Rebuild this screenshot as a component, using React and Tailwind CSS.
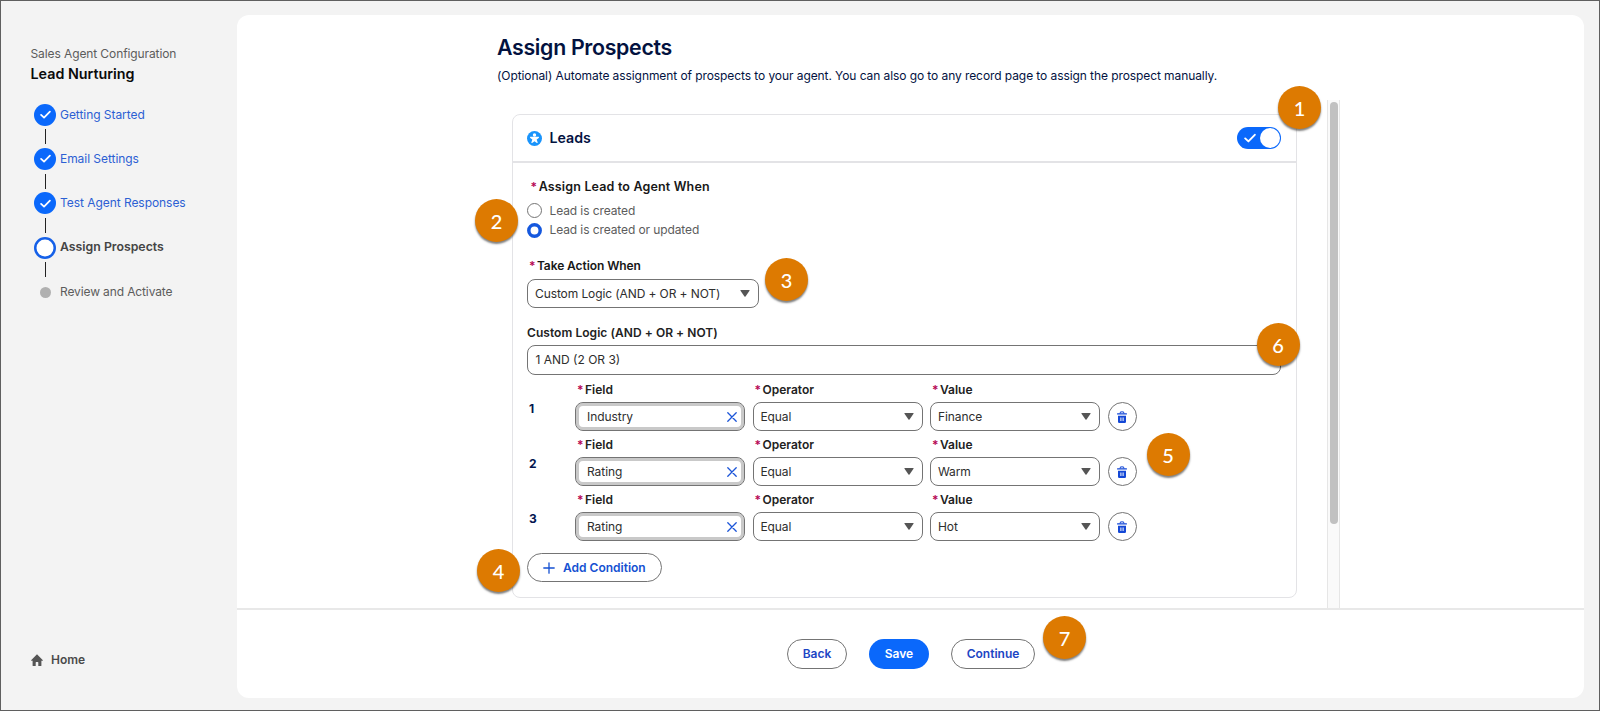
const steps = [
  { label: 'Getting Started', state: 'done' },
  { label: 'Email Settings', state: 'done' },
  { label: 'Test Agent Responses', state: 'done' },
  { label: 'Assign Prospects', state: 'current' },
  { label: 'Review and Activate', state: 'todo' },
];

const conditions = [
  { field: 'Industry', operator: 'Equal', value: 'Finance' },
  { field: 'Rating', operator: 'Equal', value: 'Warm' },
  { field: 'Rating', operator: 'Equal', value: 'Hot' },
];

function Check({ className }) {
  return (
    <svg viewBox="0 0 12 12" className={className} fill="none" stroke="currentColor" strokeWidth="1.9" strokeLinecap="round" strokeLinejoin="round">
      <path d="M1.2 6.4 4.4 9.4 10.8 2.8" />
    </svg>
  );
}

function StepMarker({ state }) {
  if (state === 'done')
    return (
      <span className="flex size-[22px] items-center justify-center rounded-full bg-[#0a68fb] text-white">
        <Check className="size-[11px]" />
      </span>
    );
  if (state === 'current')
    return (
      <svg viewBox="0 0 22 22" className="size-[22px]">
        <circle cx="11" cy="11" r="9.75" fill="#fff" stroke="#1560e8" strokeWidth="2.5" />
      </svg>
    );
  return <span className="size-[11px] rounded-full bg-[#b0b0b0]" />;
}

const stepText = {
  done: 'tracking-[-0.05px] text-[#2c5fd3]',
  current: 'text-[12.3px] font-semibold text-[#444]',
  todo: 'tracking-[-0.12px] text-[#5c5c5c]',
};

function Sidebar() {
  return (
    <aside className="flex w-[236px] flex-col pl-[29.5px]">
      <p className="mt-[44px] leading-[18px] tracking-[-0.1px] text-[#5c5c5c]">Sales Agent Configuration</p>
      <h2 className="mt-px text-[14.3px] leading-[20px] font-semibold text-[#0b0b0b]">Lead Nurturing</h2>
      <ol className="mt-[19.5px] flex flex-col">
        {steps.map((s, i) => (
          <li key={s.label} className="flex flex-col">
            <div className="flex h-[22px] items-center gap-[4px] pl-[3.5px]">
              <span className="flex w-[22px] justify-center">
                <StepMarker state={s.state} />
              </span>
              <span className={stepText[s.state]}>{s.label}</span>
            </div>
            {i < steps.length - 1 && (
              <div className="flex h-[22.4px] w-[30px] items-center justify-center">
                <span className="h-[15px] w-px bg-[#222]" />
              </div>
            )}
          </li>
        ))}
      </ol>
      <a className="mt-auto mb-[41px] flex items-center gap-[8.5px] leading-[18px] font-semibold text-[#4a4a4a]">
        <svg viewBox="0 0 12 12" className="size-[12px]" fill="#555">
          <path d="M6 .2 11.9 6.2Q12 6.8 11.4 6.8H10.4V11.4Q10.4 12 9.8 12H7.3V8.4Q7.3 7.9 6.8 7.9H5.2Q4.7 7.9 4.7 8.4V12H2.2Q1.6 12 1.6 11.4V6.8H.6Q0 6.8.1 6.2Z" />
        </svg>
        <span>Home</span>
      </a>
    </aside>
  );
}

function Required() {
  return <span className="mr-[1.5px] text-[12px] text-[#b60554]">*</span>;
}

function Caret() {
  return (
    <svg viewBox="0 0 10 7" className="h-[7px] w-[10px]" fill="#555">
      <path d="M.9 0h8.2q.9 0 .4.8L5.5 6.4q-.5.6-1 0L.5.8Q0 0 .9 0Z" />
    </svg>
  );
}

function Select({ value, className }) {
  return (
    <div className={`flex h-[29px] items-center justify-between rounded-[8px] border border-[#747474] bg-white pr-[8px] pl-[7px] tracking-[-0.1px] text-[#2e2e2e] ${className}`}>
      <span>{value}</span>
      <Caret />
    </div>
  );
}

function Labelled({ label, children }) {
  return (
    <div className="flex w-[170px] flex-col">
      <span className="mb-[4px] flex h-[17px] items-center pl-[2px] font-semibold text-[#222]">
        <Required />
        <span>{label}</span>
      </span>
      {children}
    </div>
  );
}

function TrashIcon() {
  return (
    <svg viewBox="0 0 10 12" className="mt-px h-[12px] w-[10px]" fill="#1448d6">
      <path d="M3 2.6 3.5.9h3L7 2.6" fill="none" stroke="#1448d6" strokeWidth="1" strokeLinejoin="round" />
      <rect x="0" y="2.3" width="10" height="1.3" rx=".5" />
      <path fillRule="evenodd" d="M1 4.7h8v6q0 1.3-1.2 1.3H2.2Q1 12 1 10.7ZM3.4 6.4v3.6h1V6.4Zm2.2 0v3.6h1V6.4Z" />
    </svg>
  );
}

function ConditionRow({ index, field, operator, value }) {
  return (
    <div className="flex h-[55px]">
      <span className="mt-[19px] w-[48px] pl-[2px] leading-[18px] font-bold text-[#03154f]">{index}</span>
      <div className="flex gap-[7.5px]">
        <Labelled label="Field">
          <div className="flex h-[29px] items-center justify-between rounded-[8px] border border-[#747474] bg-white pr-[7.5px] pl-[11px] tracking-[-0.05px] text-[#2e2e2e] inset-ring-[3px] inset-ring-[#c9c9c9]">
            <span>{field}</span>
            <svg viewBox="0 0 10 10" className="size-[10px]" fill="none" stroke="#1c55d8" strokeWidth="1.3" strokeLinecap="round">
              <path d="M.8.8 9.2 9.2M9.2.8.8 9.2" />
            </svg>
          </div>
        </Labelled>
        <Labelled label="Operator">
          <Select value={operator} />
        </Labelled>
        <Labelled label="Value">
          <Select value={value} />
        </Labelled>
        <button className="mt-[21px] flex size-[29px] items-center justify-center rounded-full border border-[#747474] bg-white">
          <TrashIcon />
        </button>
      </div>
    </div>
  );
}

function LeadsCard() {
  return (
    <section className="mt-[14px] ml-[15px] h-[484px] w-[785px] rounded-[8px] border border-[#e3e3e6] bg-white">
      <header className="flex h-[48px] items-center border-b-2 border-[#e3e3e6] pr-[15px] pl-[14px]">
        <svg viewBox="0 0 16 16" className="size-[15px]">
          <circle cx="8" cy="8" r="8" fill="#1a94fb" />
          <circle cx="8" cy="4.2" r="1.8" fill="#fff" />
          <path fill="#fff" d="M3.5 6.2h9q.7.5 0 1.2L10.3 9l1.1 3.2q-.3.9-1.3.4L8 11l-2.1 1.6q-1 .5-1.3-.4L5.7 9 3.5 7.4q-.7-.7 0-1.2Z" />
        </svg>
        <h3 className="ml-[7.5px] text-[14.2px] font-semibold text-[#03123f]">Leads</h3>
        <span className="ml-auto flex h-[22px] w-[44px] items-center justify-between rounded-full bg-[#0a68fb] pr-[1px] pl-[7px] text-white">
          <Check className="size-[12px]" />
          <span className="size-[20px] rounded-full bg-white" />
        </span>
      </header>
      <div className="flex flex-col pl-[14px]">
        <div className="mt-[15px] flex h-[18px] items-center pl-[3.5px] text-[12.5px] font-semibold tracking-[0.16px] text-[#181818]">
          <Required />
          <span>Assign Lead to Agent When</span>
        </div>
        <label className="mt-[5px] flex h-[19px] items-center gap-[7.5px] tracking-[-0.1px] text-[#5c5c5c]">
          <span className="size-[15px] rounded-full border border-[#747474] bg-white" />
          <span>Lead is created</span>
        </label>
        <label className="flex h-[20px] items-center gap-[7.5px] tracking-[-0.1px] text-[#5c5c5c]">
          <svg viewBox="0 0 15 15" className="size-[15px]">
            <circle cx="7.5" cy="7.5" r="5.7" fill="#fff" stroke="#1558de" strokeWidth="3.5" />
          </svg>
          <span>Lead is created or updated</span>
        </label>
        <div className="mt-[17px] flex h-[18px] items-center pl-[2px] font-semibold tracking-[-0.08px] text-[#181818]">
          <Required />
          <span>Take Action When</span>
        </div>
        <Select value="Custom Logic (AND + OR + NOT)" className="mt-[4px] w-[231.5px]" />
        <div className="mt-[16px] h-[18px] leading-[18px] font-semibold tracking-[0.05px] text-[#222]">Custom Logic (AND + OR + NOT)</div>
        <div className="mt-[3px] flex h-[30px] w-[754px] items-center rounded-[8px] border border-[#747474] pl-[7.5px] text-[#2e2e2e]">1 AND (2 OR 3)</div>
        <div className="mt-[6px] flex flex-col">
          {conditions.map((c, i) => (
            <ConditionRow key={i} index={i + 1} {...c} />
          ))}
        </div>
        <button className="mt-[7px] flex h-[29px] w-[135px] items-center rounded-full border border-[#747474] bg-white pl-[15px] font-semibold text-[#1450d2]">
          <svg viewBox="0 0 12 12" className="mr-[8px] size-[12px]" fill="none" stroke="currentColor" strokeWidth="1.3" strokeLinecap="round">
            <path d="M6 .8v10.4M.8 6h10.4" />
          </svg>
          <span>Add Condition</span>
        </button>
      </div>
    </section>
  );
}

function Badge({ n, className }) {
  return (
    <span className={`absolute flex size-[43px] items-center justify-center rounded-full bg-[#dd7a01] font-['Lato',sans-serif] text-[20px] font-medium text-white shadow-[0_2px_2px_rgba(0,0,0,0.5)] ${className}`}>
      {n}
    </span>
  );
}

export default function App() {
  return (
    <div className="relative flex h-[711px] w-[1600px] overflow-hidden border border-[#5f5f5f] bg-[#f3f3f3] pr-[15px] font-['Inter','Liberation_Sans',sans-serif] text-[12px]">
      <Sidebar />
      <main className="mt-[14px] mb-[12px] flex flex-1 flex-col overflow-hidden rounded-[12px] bg-white">
        <div className="flex h-[593px] w-[1103px] flex-col pl-[260px]">
          <h1 className="mt-[18px] text-[21.3px] leading-[28px] font-semibold tracking-[-0.3px] text-[#03123f]">Assign Prospects</h1>
          <p className="mt-[6px] leading-[18px] tracking-[-0.08px] text-[#03123f]">
            (Optional) Automate assignment of prospects to your agent. You can also go to any record page to assign the prospect manually.
          </p>
          <div className="mt-[15px] flex flex-1 justify-between">
            <LeadsCard />
            <div className="w-[13px] border-x border-[#e6e6e6] bg-[#fafafa] pt-[2px] pl-[2px]">
              <div className="h-[422px] w-[8px] rounded-full bg-[#c1c1c1]" />
            </div>
          </div>
        </div>
        <footer className="flex flex-1 justify-start gap-[22px] border-t-2 border-[#e8e8e8] pt-[29px] pl-[550px] font-semibold text-[#1c45c4]">
          <button className="h-[30px] w-[60px] rounded-full border border-[#747474]">Back</button>
          <button className="h-[30px] w-[60px] rounded-full bg-[#0a68fb] text-white">Save</button>
          <button className="h-[30px] w-[84px] rounded-full border border-[#747474]">Continue</button>
        </footer>
      </main>
      <Badge n="1" className="top-[85px] left-[1277px]" />
      <Badge n="2" className="top-[198px] left-[474px]" />
      <Badge n="3" className="top-[257px] left-[764px]" />
      <Badge n="4" className="top-[548px] left-[476px]" />
      <Badge n="5" className="top-[432px] left-[1145.5px]" />
      <Badge n="6" className="top-[322px] left-[1255.5px]" />
      <Badge n="7" className="top-[615px] left-[1042px]" />
    </div>
  );
}
